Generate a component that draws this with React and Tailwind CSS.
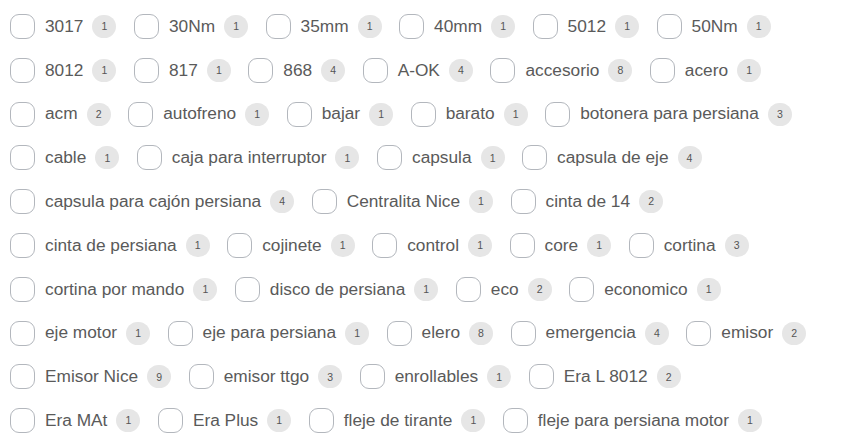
import React from "react";

const rows = [
  [["3017", 1], ["30Nm", 1], ["35mm", 1], ["40mm", 1], ["5012", 1], ["50Nm", 1]],
  [["8012", 1], ["817", 1], ["868", 4], ["A-OK", 4], ["accesorio", 8], ["acero", 1]],
  [["acm", 2], ["autofreno", 1], ["bajar", 1], ["barato", 1], ["botonera para persiana", 3]],
  [["cable", 1], ["caja para interruptor", 1], ["capsula", 1], ["capsula de eje", 4]],
  [["capsula para cajón persiana", 4], ["Centralita Nice", 1], ["cinta de 14", 2]],
  [["cinta de persiana", 1], ["cojinete", 1], ["control", 1], ["core", 1], ["cortina", 3]],
  [["cortina por mando", 1], ["disco de persiana", 1], ["eco", 2], ["economico", 1]],
  [["eje motor", 1], ["eje para persiana", 1], ["elero", 8], ["emergencia", 4], ["emisor", 2]],
  [["Emisor Nice", 9], ["emisor ttgo", 3], ["enrollables", 1], ["Era L 8012", 2]],
  [["Era MAt", 1], ["Era Plus", 1], ["fleje de tirante", 1], ["fleje para persiana motor", 1]],
];

function Item({ label, count }) {
  return (
    <label className="flex items-center mr-[17.5px] h-[25px] cursor-pointer">
      <span className="w-[25px] h-[25px] rounded-[9px] border border-[#b3b7bd] bg-white shrink-0" />
      <span className="ml-[10px] text-[17.3px] leading-none text-[#5a5a5a] whitespace-nowrap">{label}</span>
      <span className="ml-[9px] w-[24px] h-[23px] rounded-full bg-[#e6e6e6] flex items-center justify-center text-[10.5px] leading-none text-[#555555]">
        {count}
      </span>
    </label>
  );
}

export default function App() {
  return (
    <div
      className="w-[853px] h-[441px] bg-white overflow-hidden pl-[10px] pt-[14px] flex flex-col gap-y-[18.8px]"
      style={{ fontFamily: '"Liberation Sans", Arial, sans-serif' }}
    >
      {rows.map((row, i) => (
        <div key={i} className="flex items-center">
          {row.map(([l, c]) => (
            <Item key={l} label={l} count={c} />
          ))}
        </div>
      ))}
    </div>
  );
}
